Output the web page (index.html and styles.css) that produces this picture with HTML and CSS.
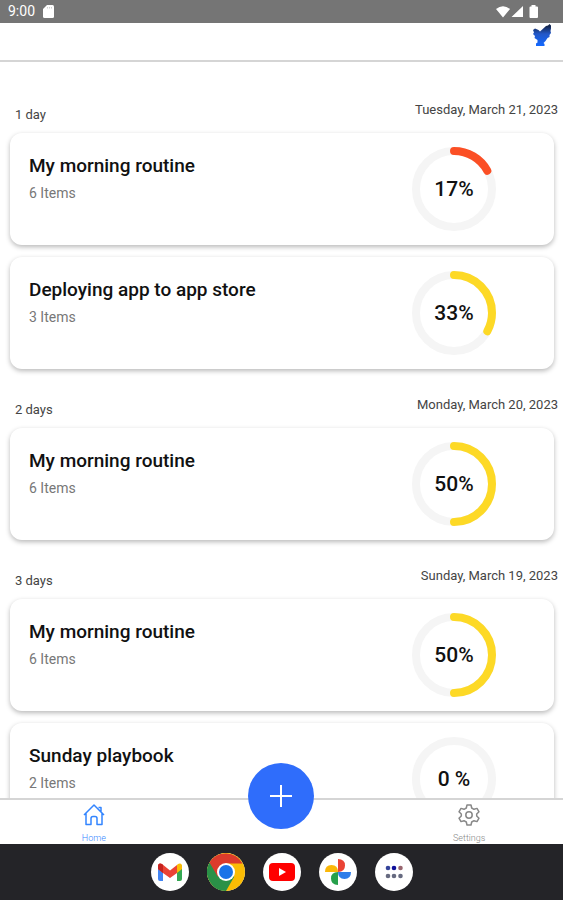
FILE: index.html
```html
<!DOCTYPE html>
<html lang="en">
<head>
<meta charset="utf-8">
<meta name="viewport" content="width=device-width, initial-scale=1">
<title>Routines</title>
<link rel="stylesheet" href="styles.css">
</head>
<body>
<div class="status">
  <span>9:00</span>
  <svg width="11" height="13" viewBox="0 0 11 13"><path d="M4 0h5.500q1.500 0 1.500 1.500v10q0 1.500-1.500 1.500h-8Q0 13 0 11.500V4z" fill="#fff"/><path d="M4.500 2v1.500M6.500 2v1.500M8.500 2v1.500" stroke="#bbb" stroke-width=".7"/></svg>
  <svg class="signals" width="42" height="14" viewBox="0 0 42 14" fill="#fff"><path d="M0 4Q7-1.500 14 4L7 12.500zM27 1v11H15.500zM35.500 1.500V0h4v1.500H41q1 0 1 1V12q0 1-1 1h-6.500q-1 0-1-1V2.500q0-1 1-1z"/></svg>
</div>
<header class="topbar">
  <svg width="20" height="24" viewBox="0 0 20 24"><defs><linearGradient id="hand" x1="0" y1="0" x2="0" y2="1"><stop offset=".1" stop-color="#14264f"/><stop offset=".45" stop-color="#2358c8"/><stop offset="1" stop-color="#1268ff"/></linearGradient></defs><path d="M1 7l2-1.500L6.500 7 8 8.500 14 3l2-.5L17.500 1l1.500 1.500v3L18.500 8l.5 2-1.500 2v2l-2 1-2 3-2 2 1 1v2H4v-2.500l1.500-1V17l-3-2 .5-2-2-2 1-1.500z" fill="url(#hand)"/></svg>
</header>
<main class="feed">
  <section>
    <div class="day"><h2>1 day</h2><time datetime="2023-03-21">Tuesday, March 21, 2023</time></div>
    <article class="card">
      <div><h3>My morning routine</h3><p>6 Items</p></div>
      <div class="ring low"><svg viewBox="0 0 84 84"><circle cx="42" cy="42" r="38"/><path pathLength="100" stroke-dasharray="17 100" d="M42 4a38 38 0 0 1 0 76a38 38 0 0 1 0-76"/></svg><span>17%</span></div>
    </article>
    <article class="card">
      <div><h3>Deploying app to app store</h3><p>3 Items</p></div>
      <div class="ring"><svg viewBox="0 0 84 84"><circle cx="42" cy="42" r="38"/><path pathLength="100" stroke-dasharray="33 100" d="M42 4a38 38 0 0 1 0 76a38 38 0 0 1 0-76"/></svg><span>33%</span></div>
    </article>
  </section>
  <section>
    <div class="day"><h2>2 days</h2><time datetime="2023-03-20">Monday, March 20, 2023</time></div>
    <article class="card">
      <div><h3>My morning routine</h3><p>6 Items</p></div>
      <div class="ring"><svg viewBox="0 0 84 84"><circle cx="42" cy="42" r="38"/><path pathLength="100" stroke-dasharray="50 100" d="M42 4a38 38 0 0 1 0 76a38 38 0 0 1 0-76"/></svg><span>50%</span></div>
    </article>
  </section>
  <section>
    <div class="day"><h2>3 days</h2><time datetime="2023-03-19">Sunday, March 19, 2023</time></div>
    <article class="card">
      <div><h3>My morning routine</h3><p>6 Items</p></div>
      <div class="ring"><svg viewBox="0 0 84 84"><circle cx="42" cy="42" r="38"/><path pathLength="100" stroke-dasharray="50 100" d="M42 4a38 38 0 0 1 0 76a38 38 0 0 1 0-76"/></svg><span>50%</span></div>
    </article>
    <article class="card">
      <div><h3>Sunday playbook</h3><p>2 Items</p></div>
      <div class="ring"><svg viewBox="0 0 84 84"><circle cx="42" cy="42" r="38"/></svg><span>0 %</span></div>
    </article>
  </section>
</main>
<nav class="tabs">
  <a class="tab active" href="#home"><svg width="22" height="22" viewBox="0 0 22 22"><path d="M1 11L11 1l10 10M15.500 3.500H18V8M3 9.500v11h5v-6q0-2 2-2h2q2 0 2 2v6h5v-11"/></svg>Home</a>
  <button class="add" aria-label="Add routine"><svg width="22" height="22" viewBox="0 0 22 22"><path d="M11 0v22M0 11h22"/></svg></button>
  <a class="tab" href="#settings"><svg width="22" height="22" viewBox="0 0 22 22"><path d="M9 1h4l.7 3 2.300 1.300L19 4.400l2 3.400L18.700 10v2l2.300 2.200-2 3.400-3-.9-2.300 1.300L13 21H9l-.7-3L6 16.700l-3 .9-2-3.400L3.300 12v-2L1 7.800l2-3.400 3 .9L8.300 4z"/><circle cx="11" cy="11" r="3.200"/></svg>Settings</a>
</nav>
<footer class="dock">
  <button class="app" aria-label="Gmail"><svg viewBox="0 0 38 38"><path d="M7 12v14q0 2 2 2h3V16z" fill="#4285f4"/><path d="M31 12v14q0 2-2 2h-3V16z" fill="#34a853"/><path d="M7 16v-2.500q0-4 4-2.500l8 6.500 7-5.500v8l-7 5-7-5z" fill="#ea4335"/><path d="M7 16v-2.500q0-4 4-2.500l1 1v8z" fill="#c5221f"/><path d="M31 16v-2.500q0-4-4-2.500l-1 1v8z" fill="#fbbc04"/></svg></button>
  <button class="app" aria-label="Chrome"><svg viewBox="0 0 38 38"><circle cx="19" cy="19" r="19" fill="#fbbc04"/><path d="M19 19L2.500 9.500A19 19 0 0 0 19 38L27.200 23.700z" fill="#2a9147"/><path d="M19 10.500H35.500A19 19 0 0 0 2.500 9.500L10.800 23.700z" fill="#dc3b2c"/><circle cx="19" cy="19" r="9" fill="#fff"/><circle cx="19" cy="19" r="7" fill="#1a73e8"/></svg></button>
  <button class="app" aria-label="YouTube"><svg viewBox="0 0 38 38"><rect x="6" y="10" width="26" height="18" rx="4" fill="#f00"/><path d="M16 15v8l7-4z" fill="#fff"/></svg></button>
  <button class="app" aria-label="Photos"><svg viewBox="0 0 38 38"><path d="M19 19V6q7 0 7 6.500T19 19z" fill="#ea4335"/><path d="M19 19h13q0 7-6.500 7T19 19z" fill="#2f7de9"/><path d="M19 19v13q-7 0-7-6.500T19 19z" fill="#26a04b"/><path d="M19 19H6q0-7 6.500-7T19 19z" fill="#fbb708"/></svg></button>
  <button class="app" aria-label="All apps"><svg viewBox="0 0 38 38"><g fill="#34449b"><circle cx="13" cy="15" r="2.300"/><circle cx="19" cy="15" r="2.300" fill="#10109a"/><circle cx="25.500" cy="15" r="2.300" fill="#98656f"/></g><g fill="#666a80"><circle cx="13" cy="23" r="2.300"/><circle cx="19" cy="23" r="2.300"/><circle cx="25.500" cy="23" r="2.300"/></g></svg></button>
</footer>
</body>
</html>
```
FILE: styles.css
```css
* { box-sizing: border-box; }
body {
  margin: 0;
  height: 100vh;
  display: flex;
  flex-direction: column;
  background: #fff;
  color: #111;
  font-family: Roboto, "Liberation Sans", sans-serif;
}
h2, h3, p { margin: 0; font-weight: 400; }
button { border: 0; padding: 0; }
svg { display: block; }

.status {
  display: flex;
  align-items: center;
  gap: 8px;
  padding: 0 25px 0 8px;
  background: #757575;
  color: #fff;
  font-size: 14px;
  line-height: 23px;
}
.signals { margin-left: auto; }
.topbar {
  display: flex;
  justify-content: flex-end;
  height: 39px;
  padding-right: 11px;
  border-bottom: 2px solid #d5d5d5;
}

.feed {
  flex: 1;
  min-height: 0;
  overflow: hidden;
  padding: 12px 9px 0 10px;
}
.day {
  display: flex;
  justify-content: space-between;
  align-items: flex-end;
  height: 59px;
  margin-right: -4px;
  padding: 0 0 10px 5px;
  color: #444;
}
.day h2, .day time { font-size: 13px; line-height: 16px; }
.day time { padding-bottom: 5px; }
.card {
  display: flex;
  justify-content: space-between;
  height: 112px;
  padding: 14px 58px 14px 19px;
  border-radius: 12px;
  background: #fff;
  box-shadow: 0 2px 5px rgba(0, 0, 0, .28);
}
.card + .card { margin-top: 12px; }
.card h3 {
  padding-top: 7px;
  font-size: 19px;
  font-weight: 500;
  line-height: 24px;
}
.card p {
  padding-top: 7px;
  color: #777;
  font-size: 14px;
  line-height: 16px;
}
.ring {
  display: grid;
  place-items: center;
  width: 84px;
  height: 84px;
  font-size: 21px;
  font-weight: 500;
}
.ring > * { grid-area: 1 / 1; }
.ring svg { width: 84px; height: 84px; fill: none; stroke-width: 8; }
.ring circle { stroke: #f5f5f5; }
.ring path { stroke: #fdd926; stroke-linecap: round; }
.ring.low path { stroke: #fb4f25; }

.tabs {
  display: grid;
  grid-template-columns: 1fr 1fr 1fr;
  justify-items: center;
  height: 46px;
  border-top: 2px solid #d5d5d5;
  background: #fff;
}
.tab {
  display: flex;
  flex-direction: column;
  align-items: center;
  gap: 6px;
  padding-top: 4px;
  color: #888;
  font-size: 9px;
  font-weight: 300;
  line-height: 12px;
  text-decoration: none;
}
.tab.active { color: #3385ff; }
.tab svg { fill: none; stroke: currentColor; stroke-width: 1.5; stroke-linejoin: round; }
.add {
  display: grid;
  place-items: center;
  width: 66px;
  height: 66px;
  margin-top: -37px;
  border-radius: 50%;
  background: #2f6dfb;
}
.add svg { stroke: #fff; stroke-width: 2; }

.dock {
  display: flex;
  justify-content: center;
  align-items: center;
  gap: 18px;
  height: 56px;
  background: #242428;
}
.app {
  width: 38px;
  height: 38px;
  border-radius: 50%;
  background: #fff;
}
```
